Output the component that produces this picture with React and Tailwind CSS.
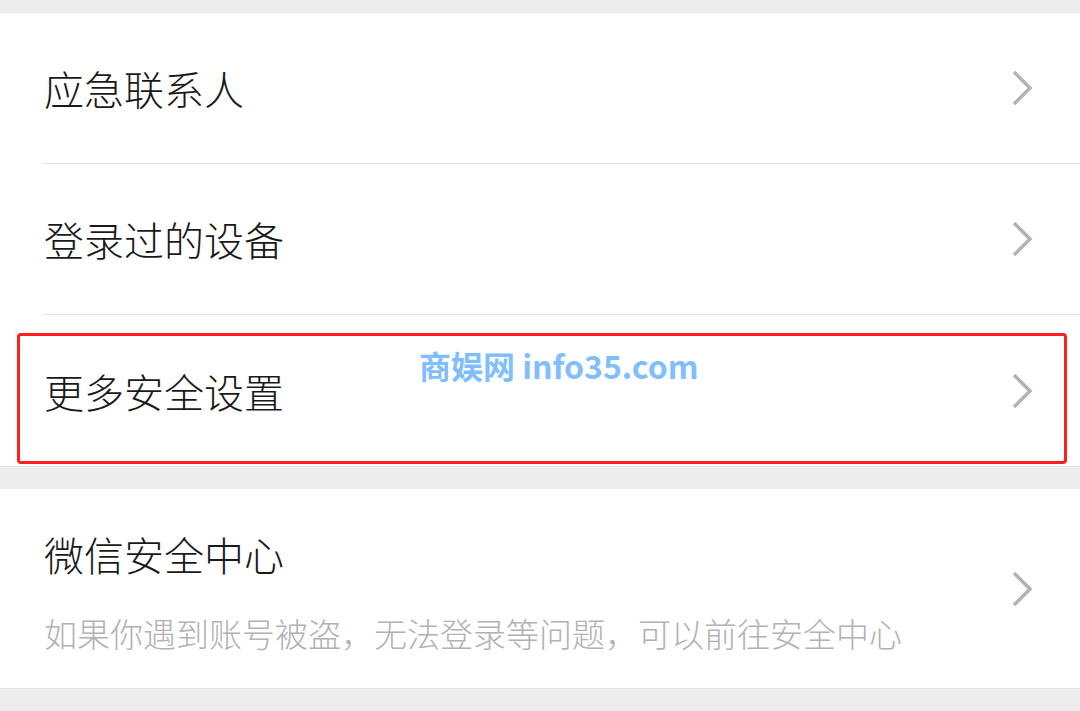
import React from "react";

const font = { fontFamily: '"Noto Sans CJK SC", "Noto Sans", sans-serif' };

function Chevron() {
  return (
    <svg width="22" height="38" viewBox="0 0 22 38" className="shrink-0">
      <polyline
        points="3,3 19,19 3,35"
        fill="none"
        stroke="#b3b3b3"
        strokeWidth="3.5"
      />
    </svg>
  );
}

function Row({ label, last, children }) {
  return (
    <div className="relative h-[151px] pl-[43px] bg-white">
      <div
        className={
          last
            ? "flex h-full items-center justify-between pr-[47px]"
            : "flex h-full items-center justify-between pr-[47px] border-b border-[#e5e5e5]"
        }
      >
        <span className="pl-px text-[40px] font-light leading-[40px] text-[#191919]">{label}</span>
        <Chevron />
      </div>
      {children}
    </div>
  );
}

export default function App() {
  return (
    <div className="min-h-[711px] w-[1080px] bg-[#ededed]" style={font}>
      <div className="h-[13px] border-b border-[#e3e3e3]" />

      <div className="bg-white">
        <Row label="应急联系人" />
        <Row label="登录过的设备" />
        <Row label="更多安全设置" last>
          {/* red highlight */}
          <div className="pointer-events-none absolute left-[17px] top-[18px] h-[131px] w-[1050px] rounded-[4px] border-[3px] border-[#ff1f1f]" />
          {/* watermark */}
          <div className="pointer-events-none absolute left-[419px] top-[33px] text-[32px] font-bold leading-[34px] text-[#80bfff]">
            商娱网 info35.com
          </div>
        </Row>
      </div>

      <div className="h-[23px] border-t border-[#e3e3e3]" />

      <div className="flex h-[200px] items-center justify-between border-b border-[#e3e3e3] bg-white pl-[44px] pr-[47px]">
        <div className="flex flex-col pt-[6px]">
          <span className="text-[40px] font-light leading-[40px] text-[#191919]">微信安全中心</span>
          <span className="mt-[43px] text-[33px] font-light leading-[33px] text-[#b2b2b2]">
            如果你遇到账号被盗，无法登录等问题，可以前往安全中心
          </span>
        </div>
        <Chevron />
      </div>
    </div>
  );
}
